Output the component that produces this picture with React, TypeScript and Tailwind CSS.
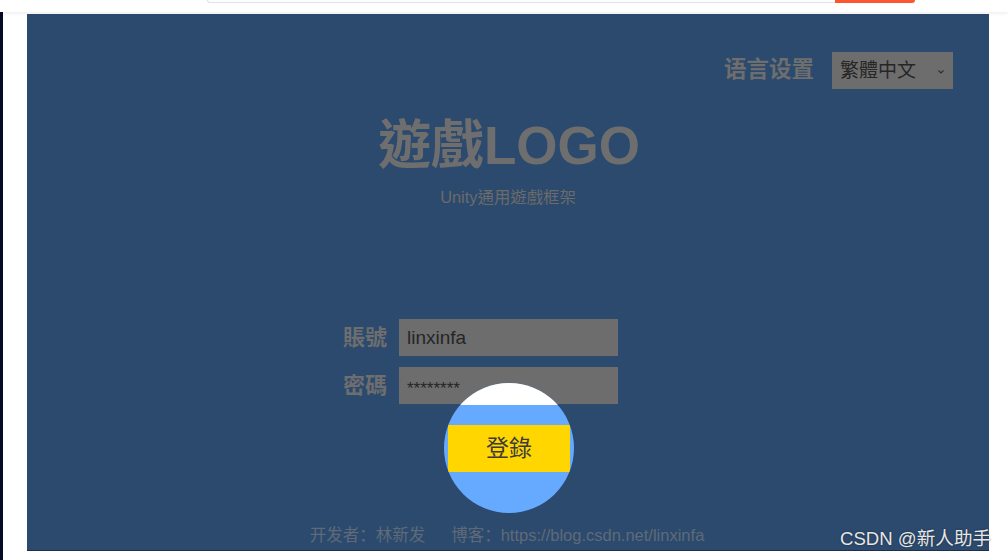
import React from "react";

const cjk = { fontFamily: '"Liberation Sans", "Noto Sans CJK SC", sans-serif' };
const cjkTC = { fontFamily: '"Liberation Sans", "Noto Sans CJK TC", sans-serif' };

export default function App() {
  return (
    <div className="relative w-[1008px] h-[560px] bg-white overflow-hidden flex flex-col" style={cjk}>
      {/* top strip */}
      <div className="h-[12px] shrink-0 bg-white shadow-[0_2px_3px_rgba(0,0,0,0.06)] relative z-10">
        <div className="ml-[207px] w-[708px] h-[3px] flex">
          <div className="flex-1 border-b border-l border-[#e2e2e2] rounded-bl-[6px]" />
          <div className="w-[80px] h-[3px] bg-[#fc5531] rounded-br-[6px]" />
        </div>
      </div>
      <div className="flex flex-1 pt-[2px]">
        <div className="w-[3px] -mt-[4px] bg-[#050b22] shrink-0" />
        <div className="w-[24px] shrink-0" />
        <div className="w-[962px] h-[537px] bg-[#2c4a6e] relative flex flex-col shrink-0 border-b border-[#1d3049]">
          {/* language row */}
          <div className="mt-[38px] h-[37px] flex justify-end items-center pr-[36px] gap-[18px]">
            <span className="text-[22.5px] font-bold text-[#6e6e6e] leading-none">语言设置</span>
            <div className="w-[121px] h-[37px] bg-[#6d6d6d] flex items-center pl-[8px] pr-[8px] justify-between">
              <span className="text-[19px] text-[#262626] leading-none" style={cjkTC}>繁體中文</span>
              <svg width="8" height="6" viewBox="0 0 8 6" className="mt-[2px]">
                <path d="M1.5 1.5 L4 4 L6.5 1.5" stroke="#2e2e2e" strokeWidth="1.1" fill="none" />
              </svg>
            </div>
          </div>
          {/* logo */}
          <div className="mt-[31px] h-[52px] flex justify-center pl-[2px]">
            <span className="text-[53px] font-bold text-[#6e6e6e] leading-[52px]" style={cjkTC}>遊戲LOGO</span>
          </div>
          <div className="mt-[15px] h-[20px] flex justify-center">
            <span className="text-[16.4px] text-[#6b6b6b] leading-[20px]" style={cjkTC}>Unity通用遊戲框架</span>
          </div>
          {/* form */}
          <div className="mt-[112px] ml-[316px] flex flex-col gap-[11px]">
            <div className="flex items-center gap-[11px]">
              <span className="w-[45px] text-[22px] font-bold text-[#6e6e6e] leading-none" style={cjkTC}>賬號</span>
              <div className="w-[219px] h-[37px] bg-[#6d6d6d] flex items-center pl-[8px]">
                <span className="text-[19px] text-[#262626] leading-none">linxinfa</span>
              </div>
            </div>
            <div className="flex items-center gap-[11px]">
              <span className="w-[45px] text-[22px] font-bold text-[#6e6e6e] leading-none" style={cjkTC}>密碼</span>
              <div className="w-[219px] h-[37px] bg-[#6d6d6d] flex items-center pl-[8px]">
                <span className="text-[17px] text-[#262626] leading-none mt-[6px]">********</span>
              </div>
            </div>
          </div>
          <div className="flex-1" />
          {/* footer */}
          <div className="h-[20px] mb-[5px] flex justify-center gap-[26px] pr-[2px] text-[16.5px] text-[#5f6a78] leading-[20px]">
            <span>开发者：林新发</span>
            <span>博客：https://blog.csdn.net/linxinfa</span>
          </div>
          {/* login circle overlay */}
          <div className="absolute left-[417px] top-[369px] w-[130px] h-[130px] rounded-full overflow-hidden bg-[#66aaff] flex flex-col">
            <div className="h-[22px] bg-white shrink-0" />
            <div className="h-[20px] shrink-0" />
            <div className="mx-[4px] h-[47px] bg-[#ffd600] flex items-center justify-center">
              <span className="text-[23px] text-[#3b3b3b] leading-none" style={cjkTC}>登錄</span>
            </div>
          </div>
        </div>
      </div>
      {/* watermark */}
      <div className="absolute left-[840px] top-[527px] text-[18.6px] text-[#e6e6e6] leading-[24px] [text-shadow:0_0_2px_rgba(0,0,0,0.5)]">
        CSDN @新人助手
      </div>
    </div>
  );
}
